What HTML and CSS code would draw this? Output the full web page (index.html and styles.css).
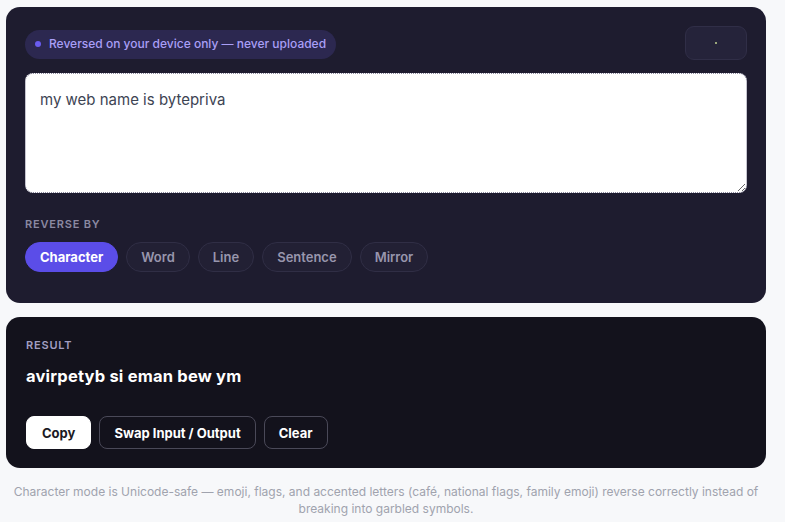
FILE: index.html
```html
<!doctype html>
<html lang="en">
	<head>
		<meta charset="UTF-8">
		<title>Text Reverser</title>
		<link rel="stylesheet" href="styles.css">
	</head>
	<body>
		<div id="wrap">
			<div class="panel">
				<div class="top">
					<span class="badge"><i></i>Reversed on your device only — never uploaded</span>
					<button class="icon-btn"><i></i></button>
				</div>
				<textarea class="input" spellcheck="false">my web name is bytepriva</textarea>
				<div class="label">REVERSE BY</div>
				<ul class="modes">
					<li class="on">Character</li>
					<li>Word</li>
					<li>Line</li>
					<li>Sentence</li>
					<li>Mirror</li>
				</ul>
			</div>
			<div class="result">
				<div class="label">RESULT</div>
				<p class="output">avirpetyb si eman bew ym</p>
				<div class="actions">
					<button class="btn white">Copy</button>
					<button class="btn">Swap Input / Output</button>
					<button class="btn">Clear</button>
				</div>
			</div>
			<p class="note">Character mode is Unicode-safe — emoji, flags, and accented letters (café, national flags, family emoji) reverse correctly instead of breaking into garbled symbols.</p>
		</div>
	</body>
</html>
```

FILE: styles.css
```css
*{ margin: 0; padding: 0; box-sizing: border-box; font-family: Inter, "Noto Sans", sans-serif;}
li{ list-style: none;}
body{
	background: #f7f8fa;
}
#wrap{
	width: 760px;
	margin: 7px 0 0 6px;
}
.panel{
	background: #1e1c2f;
	border-radius: 14px;
	padding: 19px 19px 31px;
}
.top{
	display: flex;
	justify-content: space-between;
	align-items: center;
}
.badge{
	display: flex;
	align-items: center;
	gap: 8px;
	height: 29px;
	margin-top: 2px;
	padding: 0 10px 2px 10px;
	border-radius: 15px;
	background: #2c2850;
	color: #a99ff7;
	font-size: 12px;
	font-weight: 500;
}
.badge i{
	width: 6px;
	height: 6px;
	margin-top: 2px;
	border-radius: 50%;
	background: #6a5cf0;
}
.icon-btn{
	display: flex;
	align-items: center;
	justify-content: center;
	width: 62px;
	height: 34px;
	background: #25233a;
	border: 1px solid #302e47;
	border-radius: 9px;
}
.icon-btn i{
	width: 2px;
	height: 2px;
	background: #9aa67a;
}
.input{
	display: block;
	width: 100%;
	height: 120px;
	margin-top: 13px;
	padding: 16px 14px;
	border: 1px dotted #8c8aa0;
	border-radius: 8px;
	background: #fff;
	color: #3d4453;
	font-size: 15px;
	line-height: 20px;
	resize: vertical;
	outline: none;
}
.label{
	margin-top: 24px;
	color: #8b89a2;
	font-size: 11px;
	font-weight: 600;
	letter-spacing: 0.8px;
}
.modes{
	display: flex;
	gap: 8px;
	margin-top: 11px;
}
.modes li{
	height: 30px;
	line-height: 28px;
	padding: 0 14px;
	border: 1px solid #302e45;
	border-radius: 15px;
	background: #222034;
	color: #9896ad;
	font-size: 13px;
	font-weight: 600;
}
.modes li.on{
	background: #5b4de8;
	border-color: #5b4de8;
	color: #fff;
	font-weight: 700;
}
.result{
	margin-top: 14px;
	padding: 21px 20px 19px;
	background: #13121c;
	border-radius: 14px;
}
.result .label{
	margin-top: 0;
	color: #a29ec2;
}
.output{
	margin-top: 13px;
	color: #fff;
	font-size: 16.5px;
	font-weight: 700;
	line-height: 22px;
	letter-spacing: 0.2px;
}
.actions{
	display: flex;
	gap: 8px;
	margin-top: 29px;
}
.btn{
	height: 33px;
	padding: 0 14px;
	border: 1px solid #4a4958;
	border-radius: 8px;
	background: transparent;
	color: #fff;
	font-size: 13px;
	font-weight: 700;
}
.btn.white{
	padding: 0 15px;
	background: #fff;
	border-color: #fff;
	color: #1b1a24;
}
.note{
	margin: 15px 0 0 0;
	color: #a0a3ae;
	font-size: 12px;
	line-height: 17px;
	text-align: center;
}
```
